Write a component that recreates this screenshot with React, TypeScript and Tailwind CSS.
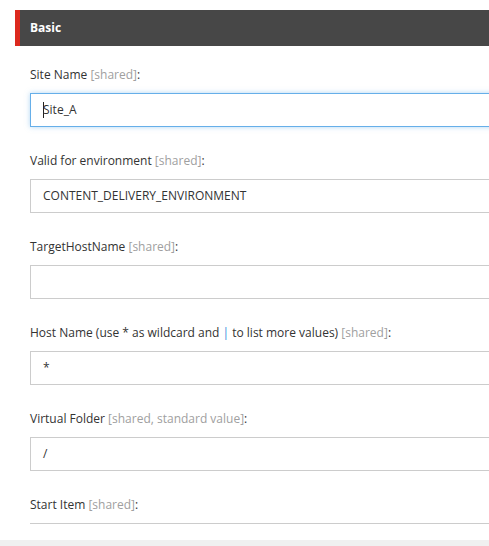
const font = { fontFamily: '"Open Sans", "Noto Sans", sans-serif' };

type Field = {
  label: React.ReactNode;
  tag: string;
  value?: string;
  focused?: boolean;
};

const fields: Field[] = [
  { label: "Site Name", tag: "[shared]", value: "Site_A", focused: true },
  { label: "Valid for environment", tag: "[shared]", value: "CONTENT_DELIVERY_ENVIRONMENT" },
  { label: "TargetHostName", tag: "[shared]", value: "" },
  {
    label: (
      <>
        Host Name (use * as wildcard and <span className="text-[#3c8ddc]">|</span> to list more values)
      </>
    ),
    tag: "[shared]",
    value: "*",
  },
  { label: "Virtual Folder", tag: "[shared, standard value]", value: "/" },
];

function Label({ children, tag }: { children: React.ReactNode; tag: string }) {
  return (
    <div className="text-[12px] leading-[18px] text-[#333] mb-[9px] whitespace-nowrap">
      {children} <span className="text-[#a0a0a0]">{tag}</span>:
    </div>
  );
}

export default function App() {
  return (
    <div className="w-[489px] h-[546px] overflow-hidden bg-white flex flex-col" style={font}>
      <div className="pt-[10px] pl-[15px] w-[540px] flex-1">
        <div className="h-[36px] bg-[#474747] border-l-[5px] border-[#dc291e] flex items-center pl-[10px]">
          <span className="text-white text-[12px] font-bold">Basic</span>
        </div>

        <div className="pl-[15px] pt-[20px] flex flex-col gap-[25px]">
          {fields.map((f, i) => (
            <div key={i}>
              <Label tag={f.tag}>{f.label}</Label>
              <div
                className={`h-[34px] flex items-center pl-[12px] text-[12px] text-[#333] bg-white border ${
                  f.focused
                    ? "border-[#66afe9] shadow-[0_0_5px_rgba(102,175,233,0.5)]"
                    : "border-[#cccccc]"
                }`}
              >
                {f.focused && <span className="w-px h-[16px] bg-[#222] -mr-px" />}
                <span>{f.value}</span>
              </div>
            </div>
          ))}
          <div>
            <Label tag="[shared]">Start Item</Label>
            <div className="border-t border-[#cccccc] h-[17px]" />
          </div>
        </div>
      </div>
      <div className="h-[6px] bg-[#f0f0f0] shrink-0" />
    </div>
  );
}
